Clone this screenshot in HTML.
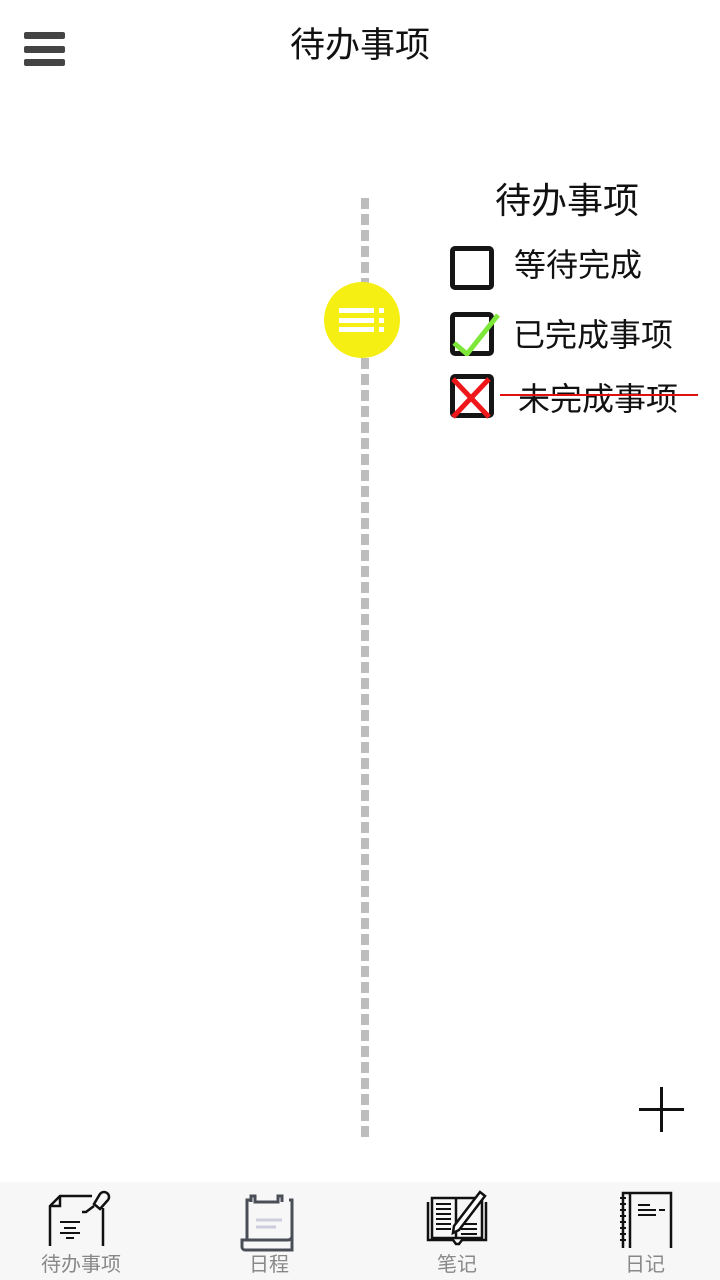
<!DOCTYPE html>
<html><head><meta charset="utf-8"><style>
*{margin:0;padding:0;box-sizing:border-box}
body{width:720px;height:1280px;background:#fff;position:relative;overflow:hidden;font-family:"Liberation Sans","Noto Sans CJK SC",sans-serif;color:#111}
.a{position:absolute}
.bar{position:absolute;left:24px;width:41px;height:7px;background:#444;border-radius:2px}
.t{position:absolute;white-space:nowrap;line-height:1}
.box{position:absolute;left:450px;width:44px;height:44px;border:5px solid #151515;border-radius:5px}
.nav{position:absolute;left:0;top:1182px;width:720px;height:98px;background:#f7f7f7}
.lab{position:absolute;top:1255px;font-size:20px;color:#888;width:160px;text-align:center;line-height:1}
</style></head><body>
<div class="bar" style="top:32px"></div>
<div class="bar" style="top:46px"></div>
<div class="bar" style="top:59px"></div>
<div class="t" style="left:290px;top:28px;font-size:35px">待办事项</div>

<div class="a" style="left:361px;top:198px;width:8px;height:940px;background:repeating-linear-gradient(#bdbdbd 0 11px,transparent 11px 16px)"></div>
<div class="a" style="left:324px;top:282px;width:76px;height:76px;border-radius:50%;background:#f5ef13"></div>
<svg class="a" style="left:324px;top:282px" width="76" height="76"><g fill="#fff"><rect x="15" y="26" width="35" height="5"/><rect x="15" y="36" width="35" height="5"/><rect x="15" y="45" width="35" height="5"/><rect x="55" y="26" width="5" height="5"/><rect x="55" y="36" width="5" height="5"/><rect x="55" y="45" width="5" height="5"/></g></svg>

<div class="t" style="left:495px;top:183px;font-size:36px">待办事项</div>
<div class="box" style="top:246px"></div>
<div class="t" style="left:514px;top:249px;font-size:32px">等待完成</div>
<div class="box" style="top:312px"></div>
<svg class="a" style="left:450px;top:310px" width="52" height="46"><path d="M4 33 L17 44 L48 5" stroke="#7ee83a" stroke-width="5" fill="none"/></svg>
<div class="t" style="left:513px;top:319px;font-size:32px">已完成事项</div>
<div class="box" style="top:374px"></div>
<svg class="a" style="left:450px;top:376px" width="44" height="44"><path d="M3 3 L39 41 M39 3 L3 41" stroke="#f0171a" stroke-width="5"/></svg>
<div class="t" style="left:518px;top:383px;font-size:32px">未完成事项</div>
<div class="a" style="left:500px;top:394px;width:198px;height:2px;background:#e01010"></div>

<div class="a" style="left:639px;top:1108px;width:45px;height:3px;background:#111"></div>
<div class="a" style="left:660px;top:1087px;width:3px;height:45px;background:#111"></div>

<div class="nav"></div>
<svg class="a" style="left:46px;top:1188px" width="70" height="60" fill="none" stroke="#111" stroke-width="2.5">
<path d="M4 58 V18 L14 8 H46"/><path d="M4 18 H14 V8"/><path d="M57 20 V58"/>
<path d="M54 6 a5 5 0 0 1 8 6 l-8 9 -6 -5 z"/><path d="M48 18 L40 24 H36"/>
<path d="M14 34 H34 M18 40 H30 M14 45 H34 M20 50 H28" stroke-width="2"/></svg>
<svg class="a" style="left:238px;top:1194px" width="58" height="58" fill="none" stroke="#4a4f57" stroke-width="3">
<path d="M9 46 V6 H13 M51 6 H54 V44"/><path d="M13 8 V2 h4 v6 H40 V2 h4 v6"/>
<path d="M4 46 H50 a4 4 0 0 0 4 -4 V56 H7 a3 3 0 0 1 -3 -3 z"/>
<path d="M18 26 H44 M18 33 H38" stroke="#ccd" stroke-width="3"/></svg>
<svg class="a" style="left:425px;top:1186px" width="66" height="64" fill="none" stroke="#111" stroke-width="2.5">
<path d="M3 16 V54 H28 L31 58 H34 L37 54 H61 V16"/><path d="M7 12 H31 V52 H7 z M31 12 H57 V52 H31"/>
<path d="M11 18 H26 M11 23 H26 M11 28 H26 M11 33 H26 M11 38 H26 M11 43 H26 M36 38 H52 M36 43 H52 M36 48 H52" stroke-width="2"/>
<path d="M29 40 L55 6 l5 4 -26 34 -6 3 z" fill="#fff"/></svg>
<svg class="a" style="left:616px;top:1190px" width="60" height="60" fill="none" stroke="#111" stroke-width="2.5">
<path d="M7 58 V3 H55 V58"/><path d="M14 3 V58"/><path d="M4 8 h6 M4 14 h6 M4 20 h6 M4 26 h6 M4 32 h6 M4 38 h6 M4 44 h6 M4 50 h6" stroke-width="2"/>
<path d="M22 15 H34 M22 20 H40 M43 20 H49 M22 25 H40" stroke-width="2"/></svg>
<div class="lab" style="left:1px">待办事项</div>
<div class="lab" style="left:189px">日程</div>
<div class="lab" style="left:377px">笔记</div>
<div class="lab" style="left:565px">日记</div>
</body></html>
